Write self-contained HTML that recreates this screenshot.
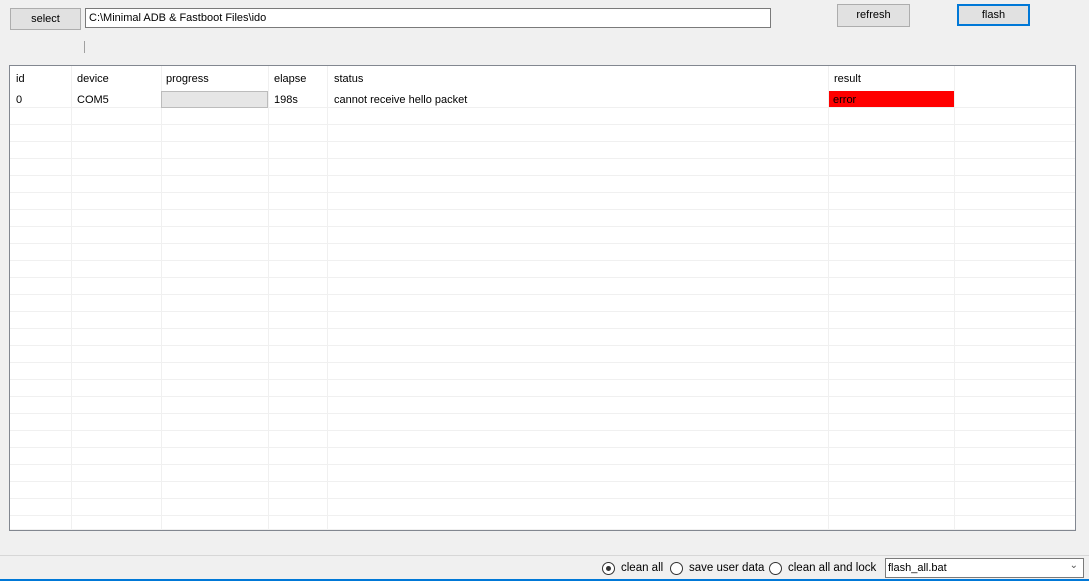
<!DOCTYPE html>
<html><head><style>
*{box-sizing:border-box;margin:0;padding:0}
body{width:1089px;height:581px;background:#f0f0f0;font-family:"Liberation Sans",sans-serif;font-size:11px;color:#000;position:relative;overflow:hidden}
.a{position:absolute}
.btn{position:absolute;background:#e1e1e1;border:1px solid #adadad;text-align:center;line-height:21px}
.grid{position:absolute;left:10px;top:66px;width:1065px;height:463px;background:#fff;
background-image:repeating-linear-gradient(to bottom,transparent 0,transparent 16px,#f0f0f0 16px,#f0f0f0 17px);background-position:0 25px;background-repeat:repeat-y;background-size:100% 17px}
.vl{position:absolute;top:66px;width:1px;height:463px;background:#f0f0f0}
.hd{position:absolute;top:73px}
.c{position:absolute;top:94px}
.rad{position:absolute;top:562px;width:13px;height:13px;border:1px solid #333;border-radius:50%;background:#fff}
.t{position:absolute;top:562px;font-size:11.5px}
</style></head><body>
<div class="btn" style="left:10px;top:8px;width:71px;height:22px;">select</div>
<div class="a" style="left:85px;top:8px;width:686px;height:20px;background:#fff;border:1px solid #7a7a7a;padding:3px 3px;">C:\Minimal ADB &amp; Fastboot Files\ido</div>
<div class="btn" style="left:837px;top:4px;width:73px;height:23px;">refresh</div>
<div class="btn" style="left:957px;top:4px;width:73px;height:22px;border:2px solid #0078d7;line-height:19px">flash</div>
<div class="a" style="left:84px;top:41px;width:1px;height:12px;background:#a0a0a0"></div>
<div class="a" style="left:9px;top:65px;width:1067px;height:466px;border:1px solid #828790"></div>
<div class="grid"></div>
<div class="a" style="left:10px;top:66px;width:1065px;height:41px;background:#fff"></div>
<div class="vl" style="left:71px"></div><div class="vl" style="left:161px"></div><div class="vl" style="left:268px"></div><div class="vl" style="left:327px"></div><div class="vl" style="left:828px"></div><div class="vl" style="left:954px"></div>
<div class="hd" style="left:16px">id</div><div class="hd" style="left:77px">device</div><div class="hd" style="left:166px">progress</div><div class="hd" style="left:274px">elapse</div><div class="hd" style="left:334px">status</div><div class="hd" style="left:834px">result</div>
<div class="c" style="left:16px">0</div><div class="c" style="left:77px">COM5</div>
<div class="a" style="left:161px;top:91px;width:107px;height:17px;background:#e6e6e6;border:1px solid #bcbcbc"></div>
<div class="c" style="left:274px">198s</div><div class="c" style="left:334px">cannot receive hello packet</div>
<div class="a" style="left:829px;top:91px;width:125px;height:16px;background:#f00;padding:3px 4px 0">error</div>
<div class="a" style="left:0;top:555px;width:1089px;height:1px;background:#d7d7d7"></div>
<div class="a" style="left:0;top:579px;width:1089px;height:2px;background:#0078d7"></div>
<div class="rad" style="left:602px"><div style="position:absolute;left:3px;top:3px;width:5px;height:5px;border-radius:50%;background:#333"></div></div>
<div class="t" style="left:621px">clean all</div>
<div class="rad" style="left:670px"></div>
<div class="t" style="left:689px">save user data</div>
<div class="rad" style="left:769px"></div>
<div class="t" style="left:788px">clean all and lock</div>
<div class="a" style="left:885px;top:558px;width:199px;height:20px;background:#fff;border:1px solid #7a7a7a;padding:3px 2px;font-size:11px">flash_all.bat<span style="position:absolute;right:5px;top:1px;color:#555;font-size:10px">&#8964;</span></div>
</body></html>
